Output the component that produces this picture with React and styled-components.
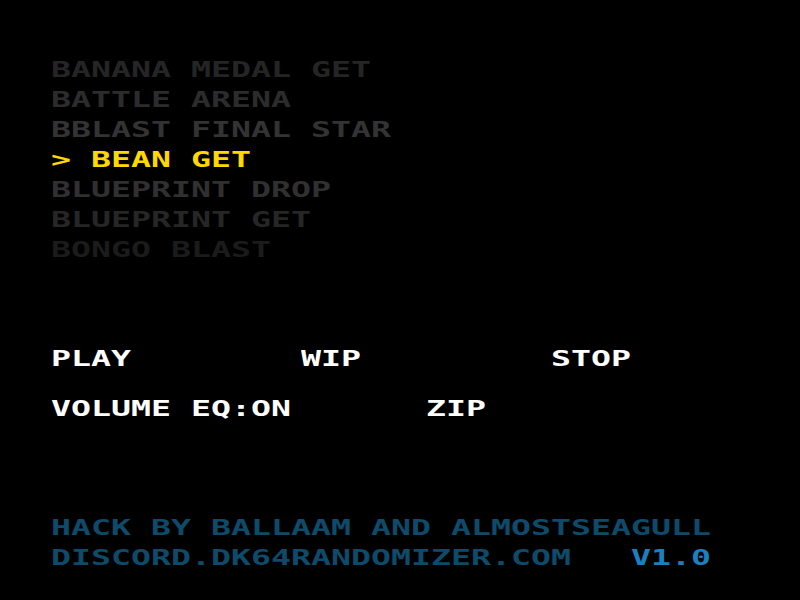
import React from 'react';
import styled, { createGlobalStyle } from 'styled-components';

const GlobalStyle = createGlobalStyle`
  html, body {
    margin: 0;
    padding: 0;
    background: #000;
  }
`;

const Screen = styled.div`
  width: 800px;
  height: 600px;
  background: #000;
  box-sizing: border-box;
  padding: 55px 0 0 51px;
  display: flex;
  flex-direction: column;
  font-family: "DejaVu Sans Mono", "Liberation Mono", monospace;
  font-weight: bold;
  font-size: 22px;
  line-height: 30px;
  overflow: hidden;
`;

// pixel-font look: stretch a mono font so each cell is 20px wide
const Label = styled.span`
  display: inline-block;
  white-space: pre;
  color: ${(p) => p.$color || '#fff'};
  transform: scaleX(1.51);
  transform-origin: left center;
`;

const Accent = styled.span`
  color: ${(p) => p.$color};
`;

const SoundList = styled.div`
  display: flex;
  flex-direction: column;
`;

const Controls = styled.div`
  margin-top: 79px;
  display: flex;
  flex-direction: column;
  gap: 20px;
  width: 750px;
`;

const ControlRow = styled.div`
  display: grid;
  grid-template-columns: repeat(${(p) => p.$cols}, 1fr);
`;

const Credits = styled.div`
  margin-top: 89px;
  display: flex;
  flex-direction: column;
`;

const sounds = [
  { name: 'BANANA MEDAL GET', color: '#252525' },
  { name: 'BATTLE ARENA', color: '#2c2c2c' },
  { name: 'BBLAST FINAL STAR', color: '#333333' },
  { name: '> BEAN GET', color: '#ffd800' },
  { name: 'BLUEPRINT DROP', color: '#303030' },
  { name: 'BLUEPRINT GET', color: '#262626' },
  { name: 'BONGO BLAST', color: '#1b1b1b' },
];

const App = () => {
  return (
    <>
      <GlobalStyle />
      <Screen>
        <SoundList>
          {sounds.map((s) => (
            <div key={s.name}>
              <Label $color={s.color}>{s.name}</Label>
            </div>
          ))}
        </SoundList>

        <Controls>
          <ControlRow $cols={3}>
            <div><Label>PLAY</Label></div>
            <div><Label>WIP</Label></div>
            <div><Label>STOP</Label></div>
          </ControlRow>
          <ControlRow $cols={2}>
            <div><Label>VOLUME EQ:ON</Label></div>
            <div><Label>ZIP</Label></div>
          </ControlRow>
        </Controls>

        <Credits>
          <div><Label $color="#0e4a6a">HACK BY BALLAAM AND ALMOSTSEAGULL</Label></div>
          <div>
            <Label $color="#0e4a6a">DISCORD.DK64RANDOMIZER.COM   <Accent $color="#1a80c0">V1.0</Accent></Label>
          </div>
        </Credits>
      </Screen>
    </>
  );
};

export default App;
